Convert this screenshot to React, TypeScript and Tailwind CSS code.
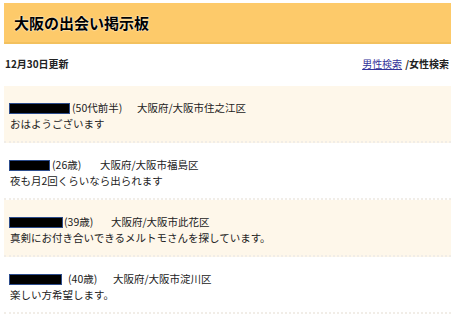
import React from "react";

const rows = [
  { bg: true, box: 61, age: "(50代前半)", ageMl: 2, ageW: 65, loc: "大阪府/大阪市住之江区", msg: "おはようございます" },
  { bg: false, box: 41, age: "(26歳)", ageMl: 2, ageW: 48, loc: "大阪府/大阪市福島区", msg: "夜も月2回くらいなら出られます" },
  { bg: true, box: 54, age: "(39歳)", ageMl: 1, ageW: 47, loc: "大阪府/大阪市此花区", msg: "真剣にお付き合いできるメルトモさんを探しています。" },
  { bg: false, box: 53, age: "(40歳)", ageMl: 6, ageW: 45, loc: "大阪府/大阪市淀川区", msg: "楽しい方希望します。" },
];

export default function App() {
  return (
    <div
      className="w-[460px] h-[317px] bg-white overflow-hidden text-[#222]"
      style={{ fontFamily: '"Noto Sans CJK JP", "Noto Sans", sans-serif' }}
    >
      <div className="ml-[4px] mt-[3px] w-[447px]">
        <div className="h-[41px] bg-[#fdca6a] border-b-2 border-[#f3c15e] flex items-center pl-[10px]">
          <h1
            className="text-[15px] font-bold text-black leading-none"
            style={{ textShadow: "0 0 2px #fff8e0, 0 0 1px #fff" }}
          >
            大阪の出会い掲示板
          </h1>
        </div>
        <div className="flex justify-between items-center mt-[12px] h-[14px] text-[10px] font-bold pl-[1px] pr-[2px]">
          <span>12月30日更新</span>
          <span>
            <a className="underline text-[#333399] font-normal mr-[3px]">男性検索</a>/女性検索
          </span>
        </div>
        <div className="mt-[16px]">
          {rows.map((r, i) => (
            <div
              key={i}
              className={`h-[57px] pt-[15px] pl-[5px] border-b-2 border-dotted border-[#f1ede7] text-[10.5px] ${r.bg ? "bg-[#fef7ea]" : "bg-white"}`}
            >
              <div className="flex items-center h-[15px] leading-none">
                <span
                  className="inline-block shrink-0 h-[11px] bg-black border border-[#2c4c8c]"
                  style={{ width: r.box }}
                />
                <span className="shrink-0" style={{ marginLeft: r.ageMl, width: r.ageW }}>{r.age}</span>
                <span>{r.loc}</span>
              </div>
              <div className="h-[15px] leading-[15px] pl-[1px]">{r.msg}</div>
            </div>
          ))}
        </div>
      </div>
    </div>
  );
}
